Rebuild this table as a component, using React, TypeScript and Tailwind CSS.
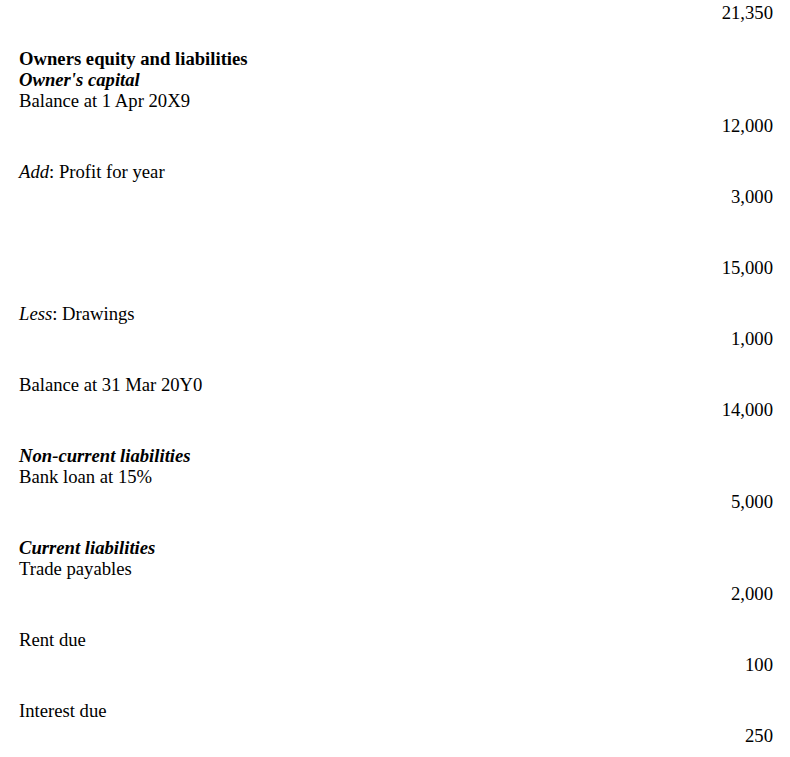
import React from "react";

type Row = {
  labels: React.ReactNode[];
  amount: string;
};

const rows: Row[] = [
  { labels: [], amount: "21,350" },
  {
    labels: [
      <span className="font-bold">Owners equity and liabilities</span>,
      <span className="font-bold italic">Owner's capital</span>,
      "Balance at 1 Apr 20X9",
    ],
    amount: "12,000",
  },
  {
    labels: [
      <>
        <span className="italic">Add</span>: Profit for year
      </>,
    ],
    amount: "3,000",
  },
  { labels: [""], amount: "15,000" },
  {
    labels: [
      <>
        <span className="italic">Less</span>: Drawings
      </>,
    ],
    amount: "1,000",
  },
  { labels: ["Balance at 31 Mar 20Y0"], amount: "14,000" },
  {
    labels: [
      <span className="font-bold italic">Non-current liabilities</span>,
      "Bank loan at 15%",
    ],
    amount: "5,000",
  },
  {
    labels: [
      <span className="font-bold italic">Current liabilities</span>,
      "Trade payables",
    ],
    amount: "2,000",
  },
  { labels: ["Rent due"], amount: "100" },
  { labels: ["Interest due"], amount: "250" },
];

export default function App() {
  return (
    <div className="min-h-screen bg-white pt-[2px] pl-[19px] pr-[17px] font-['Liberation_Serif',serif] text-[18.67px] leading-[21px] text-black">
      {rows.map((row, i) => (
        <div key={i} className="mb-[25px] flex flex-col">
          {row.labels.map((label, j) => (
            <div key={j} className="h-[21px] whitespace-nowrap">
              {label}
            </div>
          ))}
          <div className={row.labels.length ? "mt-[4px] text-right" : "text-right"}>
            {row.amount}
          </div>
        </div>
      ))}
    </div>
  );
}
